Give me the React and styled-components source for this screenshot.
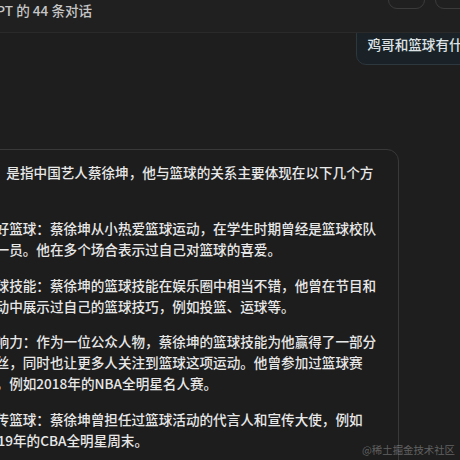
import React from "react";
import styled, { createGlobalStyle } from "styled-components";

const Global = createGlobalStyle`
  html, body {
    margin: 0;
    padding: 0;
    background: #1e1e1e;
  }
`;

const Root = styled.div`
  position: relative;
  width: 460px;
  height: 460px;
  overflow: hidden;
  background: #1e1e1e;
  font-family: "Noto Sans CJK SC", "Noto Sans", sans-serif;
  font-size: 13.6px;
`;

// the screenshot is a crop of a wider, scrolled page
const Frame = styled.div`
  width: 820px;
  margin: -32px 0 0 -260px;
  display: flex;
  flex-direction: column;
`;

const Header = styled.header`
  position: relative;
  z-index: 1;
  display: flex;
  justify-content: space-between;
  align-items: flex-start;
  padding: 12px 88px 12px 200px;
  background: #202020;
  border-bottom: 1px solid #2a2a2a;
`;

const TitleBlock = styled.div`
  display: flex;
  flex-direction: column;
`;

const Title = styled.div`
  font-size: 15px;
  font-weight: 600;
  line-height: 20px;
  color: #e6e6e6;
`;

const Subtitle = styled.div`
  line-height: 20px;
  color: #c6c6c6;
  font-weight: 500;
  white-space: nowrap;
`;

const ButtonRow = styled.div`
  display: flex;
  gap: 10px;
  margin-top: -3px;
`;

const IconButton = styled.button`
  width: 37px;
  height: 32px;
  padding: 0;
  border: 1px solid #3b3b3b;
  border-radius: 9px;
  background: transparent;
`;

const Messages = styled.div`
  display: flex;
  flex-direction: column;
  margin-top: -9px;
  padding: 0 32px 0 199px;
`;

const UserBubble = styled.div`
  align-self: flex-end;
  padding: 9px 10px;
  border: 1px solid #2c373e;
  border-radius: 10px;
  background: #1a2227;
  color: #dce2e6;
  font-weight: 500;
  line-height: 21px;
  white-space: nowrap;
`;

const Card = styled.div`
  box-sizing: border-box;
  width: 460px;
  margin-top: 84px;
  padding: 11.5px 22px 16px 12px;
  border: 1px solid #393939;
  border-radius: 12px;
  background: #1d1d1d;
  color: #e8e8e8;
  font-weight: 500;
  line-height: 21px;
`;

const Para = styled.div`
  & + & {
    margin-top: 14.5px;
  }
`;

const Item = styled(Para)`
  padding-left: 30px;
`;

const Line = styled.span`
  display: block;
  white-space: nowrap;
`;

const ListNum = styled.span`
  display: inline-block;
  box-sizing: border-box;
  width: 30px;
  margin-left: -30px;
  padding-right: 6px;
  text-align: right;
`;

const Watermark = styled.div`
  position: absolute;
  right: 5px;
  bottom: 3px;
  font-size: 10.4px;
  line-height: 14px;
  color: rgba(255, 255, 255, 0.3);
`;

const answer = [
  { lines: ["“鸡哥”是指中国艺人蔡徐坤，他与篮球的关系主要体现在以下几个方", "面："], list: false },
  {
    lines: ["1. 爱好篮球：蔡徐坤从小热爱篮球运动，在学生时期曾经是篮球校队", "的一员。他在多个场合表示过自己对篮球的喜爱。"],
    list: true,
  },
  {
    lines: ["2. 篮球技能：蔡徐坤的篮球技能在娱乐圈中相当不错，他曾在节目和", "活动中展示过自己的篮球技巧，例如投篮、运球等。"],
    list: true,
  },
  {
    lines: [
      "3. 影响力：作为一位公众人物，蔡徐坤的篮球技能为他赢得了一部分",
      "粉丝，同时也让更多人关注到篮球这项运动。他曾参加过篮球赛",
      "事，例如2018年的NBA全明星名人赛。",
    ],
    list: true,
  },
  {
    lines: ["4. 宣传篮球：蔡徐坤曾担任过篮球活动的代言人和宣传大使，例如", "2019年的CBA全明星周末。"],
    list: true,
  },
  { lines: ["总之，蔡徐坤与篮球的关系密切，篮球是他生活中重要的一部分。"], list: false },
];

function Marker({ text }) {
  // split "1. " off so continuation lines align with the item text
  const m = text.match(/^(\d\.\s)(.*)$/);
  if (!m) return text;
  return (
    <>
      <ListNum>{m[1]}</ListNum>
      {m[2]}
    </>
  );
}

export default function App() {
  return (
    <Root>
      <Global />
      <Frame>
        <Header>
          <TitleBlock>
            <Title>鸡哥和篮球</Title>
            <Subtitle>与 ChatGPT 的 44 条对话</Subtitle>
          </TitleBlock>
          <ButtonRow>
            <IconButton aria-label="分享" />
            <IconButton aria-label="更多" />
          </ButtonRow>
        </Header>
        <Messages>
          <UserBubble>鸡哥和篮球有什么关系？</UserBubble>
          <Card>
            {answer.map((block, i) => {
              const Block = block.list ? Item : Para;
              return (
                <Block key={i}>
                  {block.lines.map((l, j) => (
                    <Line key={j}>{j === 0 && block.list ? <Marker text={l} /> : l}</Line>
                  ))}
                </Block>
              );
            })}
          </Card>
        </Messages>
      </Frame>
      <Watermark>@稀土掘金技术社区</Watermark>
    </Root>
  );
}
